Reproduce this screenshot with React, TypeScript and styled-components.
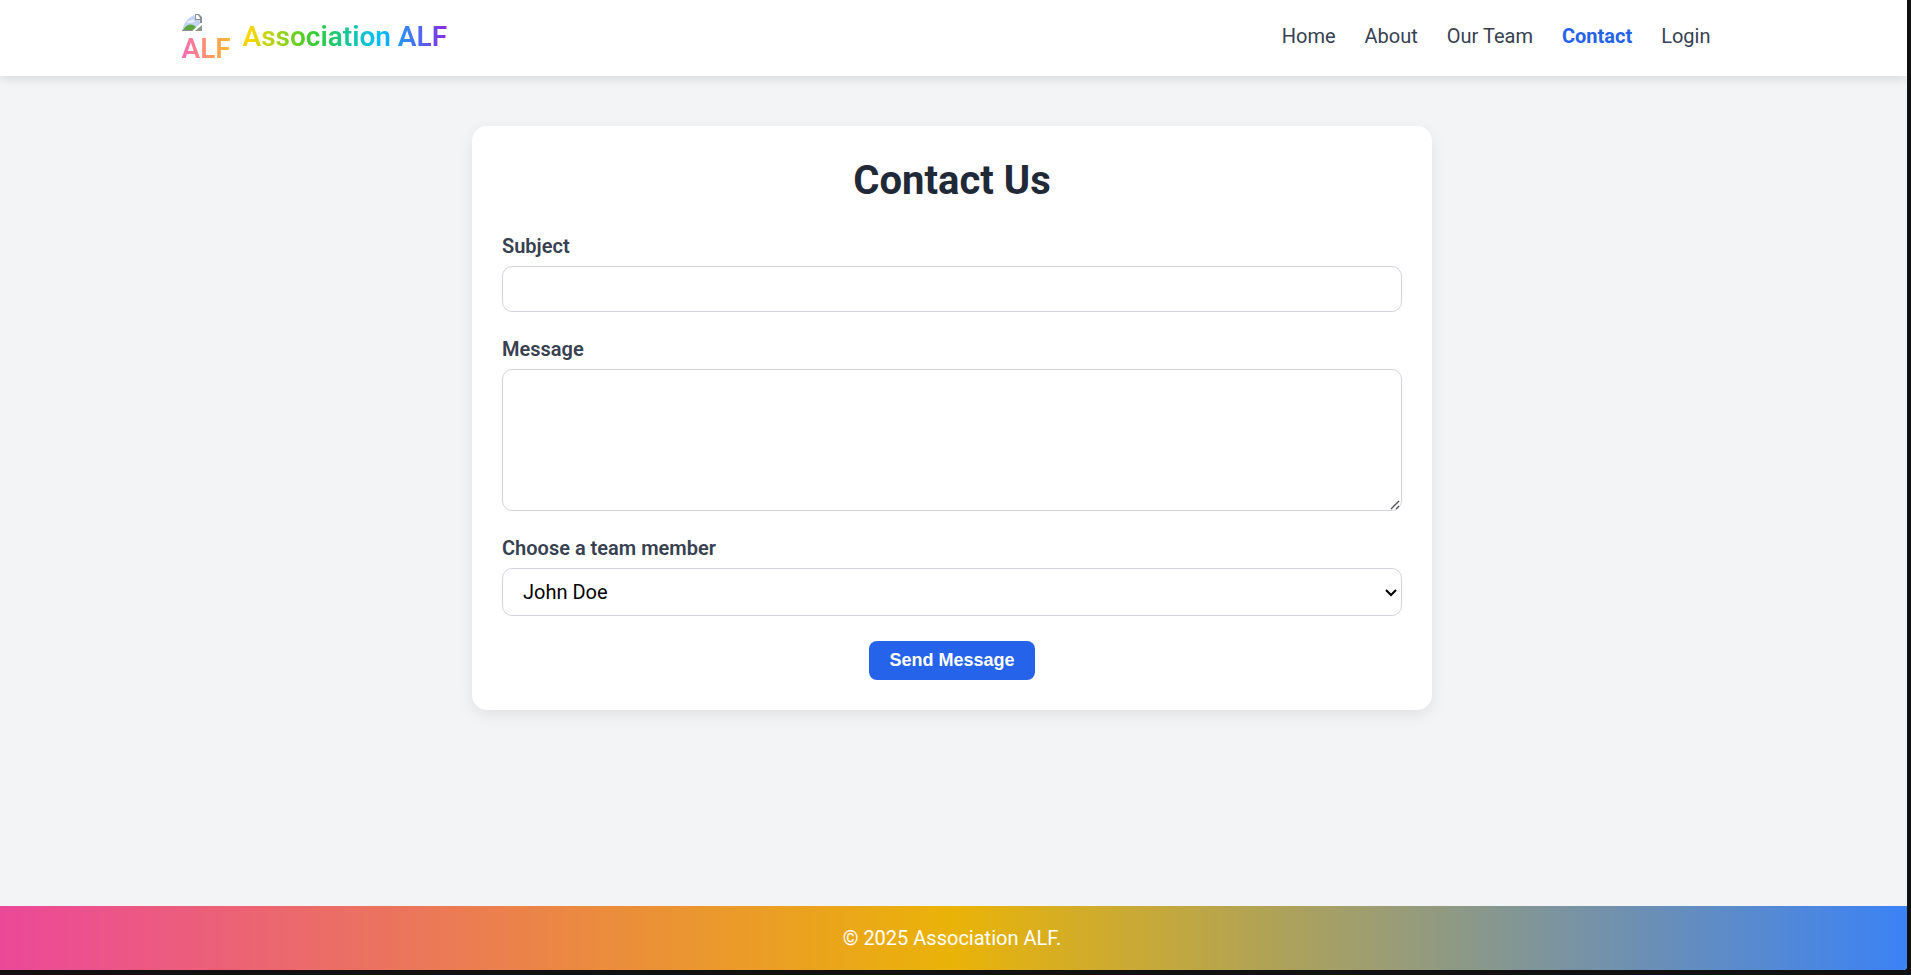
import React from "react";
import styled, { createGlobalStyle, css } from "styled-components";

const GlobalStyle = createGlobalStyle`
  *, *::before, *::after { box-sizing: border-box; }
  html, body, #root { height: 100%; }
  body {
    margin: 0;
    background: #111111;
    font-family: Roboto, "Liberation Sans", sans-serif;
    font-size: 20px;
    line-height: 30px;
    color: #000000;
  }
`;

const Frame = styled.div`
  min-height: 100%;
  padding: 0 4px 5px 0;
  display: flex;
`;

const Page = styled.div`
  flex: 1;
  min-width: 0;
  display: flex;
  flex-direction: column;
  overflow: hidden;
  background: #f3f4f6;
  border-radius: 0 0 4px 0;
`;

const Header = styled.header`
  background: #ffffff;
  box-shadow: 0 5px 8px rgba(0, 0, 0, 0.08);
`;

const HeaderInner = styled.div`
  max-width: 1604px;
  margin: 0 auto;
  padding: 12px 45px 14px 30px;
  display: flex;
  align-items: flex-start;
  justify-content: space-between;
`;

const Brand = styled.a`
  display: flex;
  align-items: center;
  gap: 11px;
  font-size: 28px;
  line-height: 36px;
  font-weight: 600;
  text-decoration: none;
  color: transparent;
  background: linear-gradient(90deg, #ff69b4, #ffd700, #32cd32, #00bfff, #8a2be2);
  background-clip: text;
  -webkit-background-clip: text;
`;

const Logo = styled.span`
  width: 50px;
  height: 50px;
  display: flex;
  flex-direction: column;
`;

const LogoIcon = styled.svg`
  display: block;
  flex: none;
  width: 20px;
  height: 20px;
`;

const LogoText = styled.span`
  line-height: 34px;
`;

const Nav = styled.nav`
  display: flex;
  flex-wrap: wrap;
  gap: 29px;
  padding-top: 9px;
`;

const NavLink = styled.a<{ $active?: boolean }>`
  color: ${(p) => (p.$active ? "#2563eb" : "#374151")};
  font-weight: ${(p) => (p.$active ? 700 : 400)};
  text-decoration: none;
`;

const Main = styled.main`
  flex: 1;
  padding: 50px 33px 50px 30px;
`;

const Card = styled.section`
  max-width: 960px;
  margin: 0 auto;
  padding: 30px;
  background: #ffffff;
  border-radius: 15px;
  box-shadow: 0 5px 15px rgba(0, 0, 0, 0.08);
`;

const Title = styled.h1`
  margin: 0 0 28px;
  font-size: 40px;
  line-height: 50px;
  font-weight: 700;
  text-align: center;
  color: #1f2937;
`;

const Form = styled.form`
  display: flex;
  flex-direction: column;
  gap: 25px;
`;

const Field = styled.div`
  display: flex;
  flex-direction: column;
  gap: 8px;
`;

const Label = styled.label`
  line-height: 24px;
  font-weight: 600;
  color: #374151;
`;

const ControlWrap = styled.div`
  position: relative;
  display: flex;
`;

const controlStyle = css`
  width: 100%;
  border: 1px solid #d1d5db;
  border-radius: 10px;
  background: #ffffff;
  font-family: inherit;
  font-size: 20px;
  color: #000000;
`;

const TextInput = styled.input`
  ${controlStyle}
  height: 46px;
  padding: 10px 20px;
`;

const TextArea = styled.textarea`
  ${controlStyle}
  height: 142px;
  padding: 10px 20px;
  resize: vertical;

  &::-webkit-resizer {
    background: transparent;
  }
`;

const Select = styled.select`
  ${controlStyle}
  appearance: none;
  height: 48px;
  padding: 8px 30px 8px 20px;
`;

const Chevron = styled.svg`
  position: absolute;
  right: 4px;
  top: 20px;
  width: 14px;
  height: 10px;
  pointer-events: none;
`;

const Grip = styled.svg`
  position: absolute;
  right: 2px;
  bottom: 1px;
  width: 10px;
  height: 10px;
  pointer-events: none;
`;

const SubmitButton = styled.button`
  align-self: center;
  padding: 8px 20px;
  border: 0;
  border-radius: 8px;
  background: #2563eb;
  color: #ffffff;
  font-family: "Liberation Sans", Arial, sans-serif;
  font-size: 18px;
  line-height: 23px;
  font-weight: 700;
  cursor: pointer;
`;

const Footer = styled.footer`
  padding: 17px 33px 17px 30px;
  background: linear-gradient(90deg, #ec4899, #eab308, #3b82f6);
  color: #ffffff;
  text-align: center;
`;

const links = ["Home", "About", "Our Team", "Contact", "Login"];

export default function App() {
  return (
    <>
      <GlobalStyle />
      <Frame>
        <Page>
          <Header>
            <HeaderInner>
              <Brand href="#home">
                <Logo>
                  <LogoIcon viewBox="0 0 20 20" aria-hidden="true">
                    <path d="M1 16Q3 7 12 3L14 7L19 8V11L10 19H0Z" fill="#c3d3f3" />
                    <path d="M1 18Q7 9 14 15L10 19H1Z" fill="#58a63c" />
                    <path d="M5 11Q6 8 9 9Q11 6 13 10Z" fill="#eef3fc" />
                    <path d="M13 2H17L20 5V11H18V8H13Z" fill="#8c8f94" />
                    <path d="M14 3H16L18 6V7H14Z" fill="#ffffff" />
                    <path d="M0 18H11L10 19H0Z" fill="#8c8f94" />
                    <path d="M13 19L20 13V19Z" fill="#8c9590" />
                    <path d="M15 18L18 15V18Z" fill="#79ad68" />
                  </LogoIcon>
                  <LogoText>ALF</LogoText>
                </Logo>
                <span>Association ALF</span>
              </Brand>
              <Nav aria-label="Main">
                {links.map((name) => (
                  <NavLink key={name} href="#" $active={name === "Contact"}>
                    {name}
                  </NavLink>
                ))}
              </Nav>
            </HeaderInner>
          </Header>
          <Main>
            <Card>
              <Title>Contact Us</Title>
              <Form onSubmit={(e) => e.preventDefault()}>
                <Field>
                  <Label htmlFor="subject">Subject</Label>
                  <TextInput id="subject" type="text" />
                </Field>
                <Field>
                  <Label htmlFor="message">Message</Label>
                  <ControlWrap>
                    <TextArea id="message" />
                    <Grip viewBox="0 0 10 10" aria-hidden="true">
                      <path d="M1 9L9 1M6 9L9 6" fill="none" stroke="#555555" strokeWidth="1.4" />
                    </Grip>
                  </ControlWrap>
                </Field>
                <Field>
                  <Label htmlFor="member">Choose a team member</Label>
                  <ControlWrap>
                    <Select id="member">
                      <option>John Doe</option>
                    </Select>
                    <Chevron viewBox="0 0 14 10" aria-hidden="true">
                      <path d="M2 2L7 7L12 2" fill="none" stroke="#000000" strokeWidth="2" />
                    </Chevron>
                  </ControlWrap>
                </Field>
                <SubmitButton type="submit">Send Message</SubmitButton>
              </Form>
            </Card>
          </Main>
          <Footer>© 2025 Association ALF.</Footer>
        </Page>
      </Frame>
    </>
  );
}
